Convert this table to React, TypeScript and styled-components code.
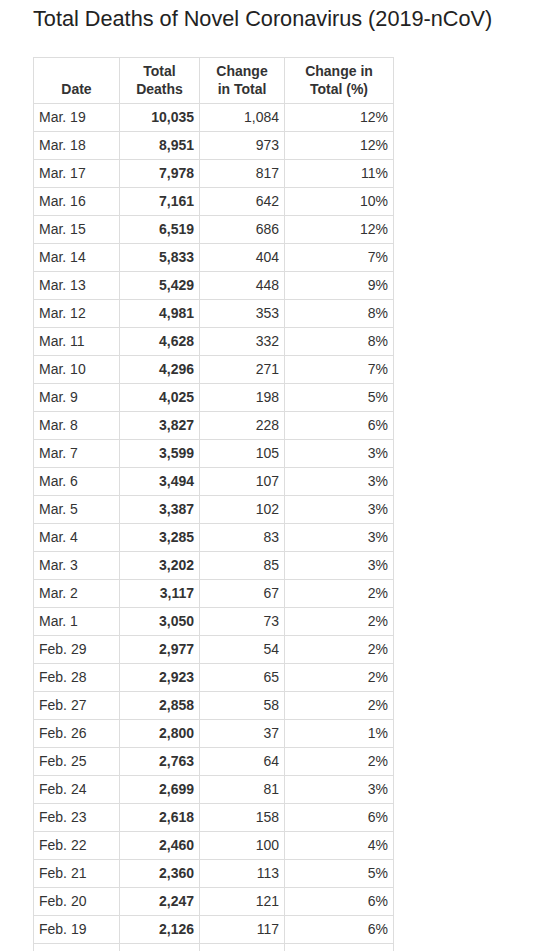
import React from "react";
import styled, { createGlobalStyle } from "styled-components";

const GlobalStyle = createGlobalStyle`
  html, body { margin: 0; padding: 0; background: #ffffff; }
  body { font-family: "Liberation Sans", Arial, sans-serif; color: #333333; }
`;

const Page = styled.div`
  padding: 6px 0 0 33px;
`;

const Title = styled.h1`
  margin: 0 0 26px 0;
  font-size: 21.7px;
  font-weight: 400;
  line-height: 25px;
  color: #222222;
  font-family: "Liberation Sans", Arial, sans-serif;
`;

const Table = styled.table`
  border-collapse: collapse;
  font-size: 14px;
  color: #333333;
  table-layout: fixed;
`;

const Head = styled.th<{ $w: number }>`
  width: ${(p) => p.$w}px;
  box-sizing: border-box;
  border: 1px solid #dddddd;
  padding: 4px 5px 5px;
  line-height: 18px;
  font-weight: 700;
  text-align: center;
  vertical-align: bottom;
`;

const Cell = styled.td<{ $align?: "left" | "right"; $bold?: boolean }>`
  border: 1px solid #dddddd;
  padding: 4px 5px 4px 5px;
  line-height: 19px;
  text-align: ${(p) => p.$align ?? "right"};
  font-weight: ${(p) => (p.$bold ? 700 : 400)};
  white-space: nowrap;
`;

const rows: [string, string, string, string][] = [
  ["Mar. 19", "10,035", "1,084", "12%"],
  ["Mar. 18", "8,951", "973", "12%"],
  ["Mar. 17", "7,978", "817", "11%"],
  ["Mar. 16", "7,161", "642", "10%"],
  ["Mar. 15", "6,519", "686", "12%"],
  ["Mar. 14", "5,833", "404", "7%"],
  ["Mar. 13", "5,429", "448", "9%"],
  ["Mar. 12", "4,981", "353", "8%"],
  ["Mar. 11", "4,628", "332", "8%"],
  ["Mar. 10", "4,296", "271", "7%"],
  ["Mar. 9", "4,025", "198", "5%"],
  ["Mar. 8", "3,827", "228", "6%"],
  ["Mar. 7", "3,599", "105", "3%"],
  ["Mar. 6", "3,494", "107", "3%"],
  ["Mar. 5", "3,387", "102", "3%"],
  ["Mar. 4", "3,285", "83", "3%"],
  ["Mar. 3", "3,202", "85", "3%"],
  ["Mar. 2", "3,117", "67", "2%"],
  ["Mar. 1", "3,050", "73", "2%"],
  ["Feb. 29", "2,977", "54", "2%"],
  ["Feb. 28", "2,923", "65", "2%"],
  ["Feb. 27", "2,858", "58", "2%"],
  ["Feb. 26", "2,800", "37", "1%"],
  ["Feb. 25", "2,763", "64", "2%"],
  ["Feb. 24", "2,699", "81", "3%"],
  ["Feb. 23", "2,618", "158", "6%"],
  ["Feb. 22", "2,460", "100", "4%"],
  ["Feb. 21", "2,360", "113", "5%"],
  ["Feb. 20", "2,247", "121", "6%"],
  ["Feb. 19", "2,126", "117", "6%"],
  ["Feb. 18", "2,009", "136", "7%"],
];

export default function App() {
  return (
    <>
      <GlobalStyle />
      <Page>
        <Title>Total Deaths of Novel Coronavirus (2019-nCoV)</Title>
        <Table>
          <thead>
            <tr>
              <Head $w={86}>Date</Head>
              <Head $w={80}>
                Total
                <br />
                Deaths
              </Head>
              <Head $w={85}>
                Change
                <br />
                in Total
              </Head>
              <Head $w={109}>
                Change in
                <br />
                Total (%)
              </Head>
            </tr>
          </thead>
          <tbody>
            {rows.map((r) => (
              <tr key={r[0]}>
                <Cell $align="left">{r[0]}</Cell>
                <Cell $bold>{r[1]}</Cell>
                <Cell>{r[2]}</Cell>
                <Cell>{r[3]}</Cell>
              </tr>
            ))}
          </tbody>
        </Table>
      </Page>
    </>
  );
}
